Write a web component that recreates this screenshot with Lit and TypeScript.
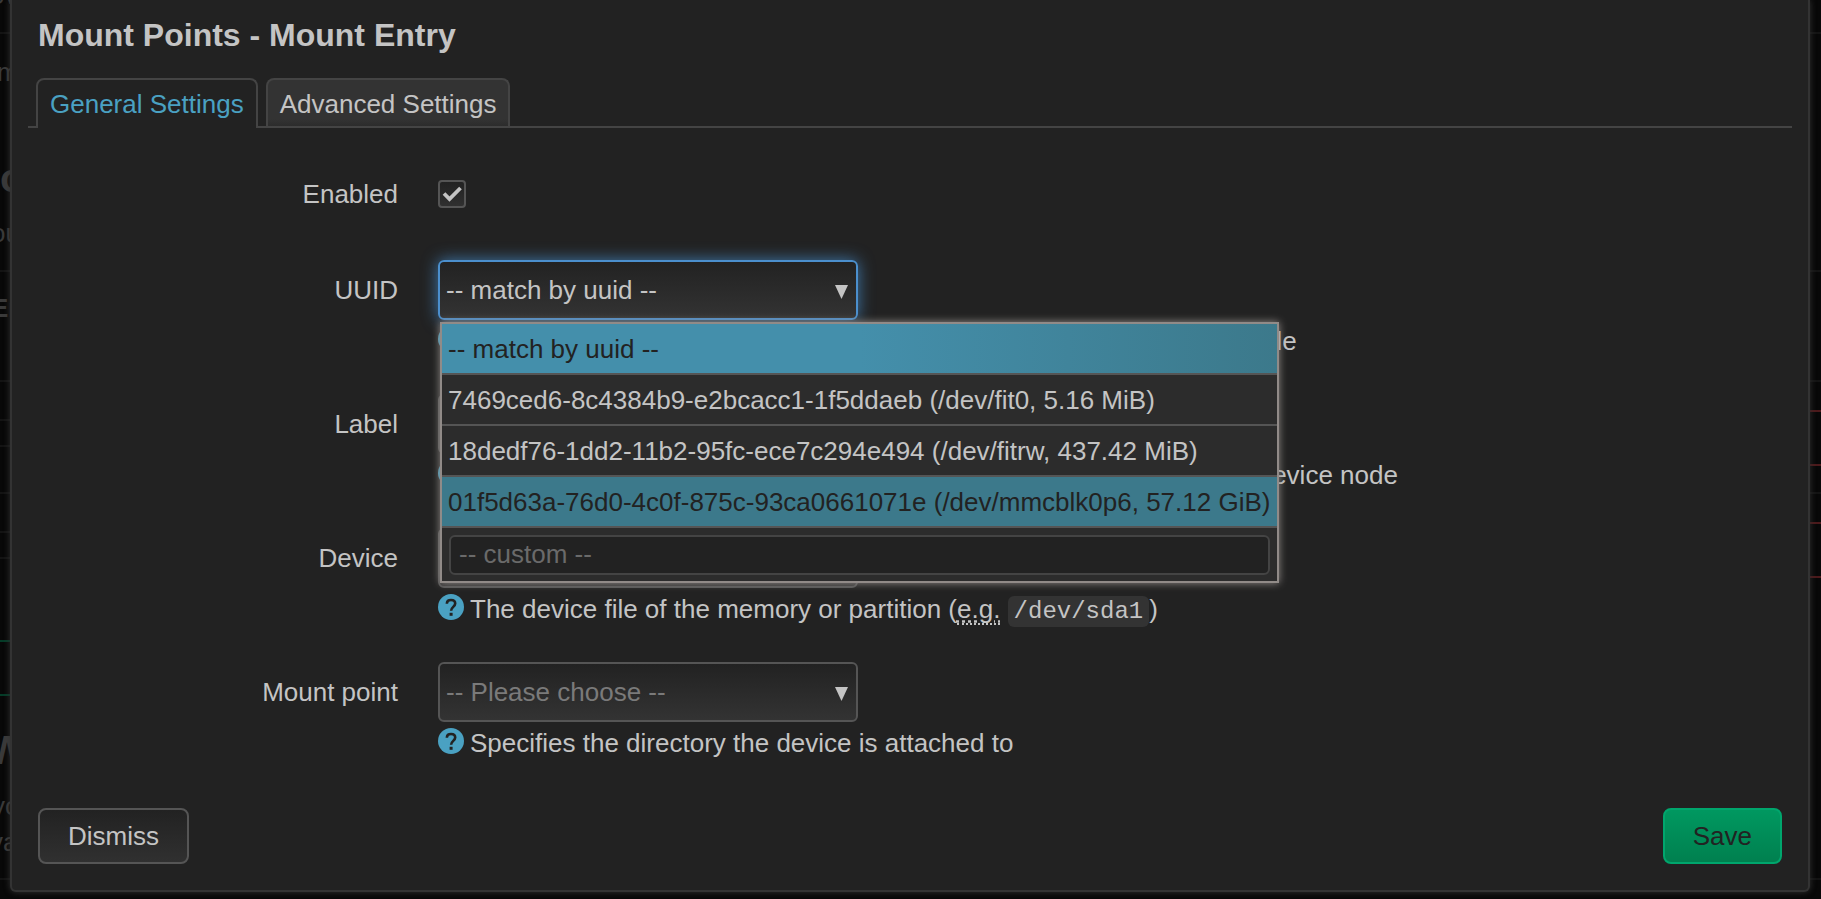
import { LitElement, html, css, svg } from "lit";
import { customElement, state } from "lit/decorators.js";

const CHOICES = [
  "-- match by uuid --",
  "7469ced6-8c4384b9-e2bcacc1-1f5ddaeb (/dev/fit0, 5.16 MiB)",
  "18dedf76-1dd2-11b2-95fc-ece7c294e494 (/dev/fitrw, 437.42 MiB)",
  "01f5d63a-76d0-4c0f-875c-93ca0661071e (/dev/mmcblk0p6, 57.12 GiB)",
];

/* Dimmed page fragments that peek out on each side of the dialog. */
const BACK_TEXT = [
  { cls: "plain", x: -10, y: -20, text: "ov" },
  { cls: "plain", x: -3, y: 57, text: "m" },
  { cls: "big", x: 0, y: 155, text: "o" },
  { cls: "plain", x: -9, y: 218, text: "ou" },
  { cls: "bold", x: -9, y: 293, text: "En" },
  { cls: "big", x: -12, y: 727, text: "W" },
  { cls: "plain", x: -8, y: 791, text: "yo" },
  { cls: "plain", x: -10, y: 827, text: "va" },
];
const BACK_RULES = [
  { y: 32, side: "both", tone: "grey" },
  { y: 270, side: "both", tone: "grey" },
  { y: 380, side: "both", tone: "grey" },
  { y: 419, side: "left", tone: "grey" },
  { y: 445, side: "left", tone: "grey" },
  { y: 492, side: "both", tone: "grey" },
  { y: 531, side: "left", tone: "grey" },
  { y: 557, side: "left", tone: "grey" },
  { y: 640, side: "left", tone: "green" },
  { y: 694, side: "left", tone: "green" },
  { y: 410, side: "right", tone: "red" },
  { y: 464, side: "right", tone: "red" },
  { y: 522, side: "right", tone: "red" },
  { y: 576, side: "right", tone: "red" },
  { y: 878, side: "both", tone: "grey" },
];

const helpIcon = svg`<svg class="help" viewBox="0 0 26 26" aria-hidden="true">
  <circle cx="13" cy="13" r="13" fill="#4aa1c2"/>
  <path d="M8.9 9.8V9.2C9 7.2 10.7 6 13 6s4.2 1.3 4.2 3.5c0 3.3-4.1 3.5-4.1 7.2" fill="none" stroke="#222" stroke-width="2.6"/>
  <rect x="11.6" y="18.8" width="3" height="3" fill="#222"/>
</svg>`;

@customElement("app-root")
export class AppRoot extends LitElement {
  @state() private enabled = true;
  @state() private selected = 0;

  static styles = css`
    :host {
      display: block;
      position: relative;
      min-height: 100vh;
      box-sizing: border-box;
      padding: 0 11px 7px 10px;
      overflow: hidden;
      background: #080808;
      color: #c4c4c4;
      font: 26px/36px "Liberation Sans", Arial, sans-serif;
    }
    * { box-sizing: border-box; }
    .backdrop { position: absolute; inset: 0; color: #3a3a3a; }
    .frag { position: absolute; white-space: nowrap; line-height: 30px; }
    .big { font-size: 40px; font-weight: bold; line-height: 46px; }
    .bold { font-weight: bold; }
    .rule { position: absolute; height: 2px; width: 12px; }
    .left { left: 0; }
    .right { right: 0; }
    .both { width: 100%; left: 0; }
    .grey { background: #141414; }
    .green { background: #053c28; }
    .red { background: #4c191b; }

    .modal {
      position: relative;
      display: flex;
      flex-direction: column;
      min-height: calc(100vh - 7px);
      padding: 0 16px 26px;
      border: 2px solid #333;
      border-top: 0;
      border-radius: 0 0 6px 6px;
      background: #222;
      box-shadow: 0 0 6px #333;
    }
    h4 { margin: 0; padding: 15px 10px 0; font-size: 32px; line-height: 40px; }
    .tabs {
      display: flex;
      gap: 8px;
      margin-top: 23px;
      padding: 0 8px;
      border-bottom: 2px solid #444;
    }
    .tab {
      padding: 6px 12px 4px;
      border: 2px solid #444;
      border-bottom: 0;
      border-radius: 8px 8px 0 0;
      background: linear-gradient(#333 85%, #2c2c2c);
      color: #c4c4c4;
      text-decoration: none;
    }
    .tab.active { margin-bottom: -2px; background: #222; color: #4aa1c2; padding-bottom: 6px; }
    form { display: flex; flex-direction: column; flex: 1; }
    .fields { display: grid; gap: 36px; padding-top: 36px; }
    .row { display: grid; grid-template-columns: 370px 1fr; column-gap: 40px; min-height: 60px; }
    .row > label { text-align: right; padding-top: 12px; }
    .check { display: flex; align-items: center; height: 60px; }
    .check input {
      appearance: none;
      width: 28px;
      height: 28px;
      margin: 0;
      border: 2px solid #555;
      border-radius: 4px;
      background: linear-gradient(#222, #303030);
    }
    .check .tick { width: 20px; height: 20px; margin-left: -24px; pointer-events: none; }
    .field { position: relative; }
    select {
      display: block;
      appearance: none;
      width: 420px;
      height: 60px;
      padding: 0 6px;
      border: 2px solid #555;
      border-radius: 6px;
      background: linear-gradient(#222, #333);
      color: #c4c4c4;
      font: inherit;
      outline: none;
    }
    select.unset { color: #7a7a7a; }
    select.open { border-color: #4b8fcd; box-shadow: 0 0 16px #3f78ab; }
    .arrow { position: absolute; left: 397px; top: 25px; width: 13px; height: 14px; fill: #c4c4c4; pointer-events: none; }
    .hint { display: flex; padding-top: 4px; line-height: 34px; }
    .help { width: 26px; height: 26px; margin: 2px 6px 0 0; flex: none; }
    abbr { text-decoration: underline dotted; border-bottom: 2px dotted #c4c4c4; line-height: 28px; display: inline-block; }
    code {
      padding: 2px 6px;
      border-radius: 6px;
      background: #333;
      font: 24px "Liberation Mono", monospace;
    }
    .menu {
      position: absolute;
      z-index: 2;
      top: 62px;
      left: 2px;
      width: max-content;
      margin: 0;
      padding: 0;
      list-style: none;
      border: 2px solid #918b88;
      background: #2c2c2c;
      box-shadow: 0 0 8px #918b88;
    }
    .menu li { border-bottom: 2px solid #555; }
    .menu li:last-child { border: 0; padding: 7px 7px 6px; }
    .opt {
      display: block;
      width: 100%;
      height: 49px;
      padding: 0 7px 0 6px;
      border: 0;
      background: none;
      color: #c4c4c4;
      font: inherit;
      text-align: left;
      white-space: nowrap;
    }
    .opt.chosen { background: linear-gradient(90deg, #448fab 50%, #3c798b); color: #222; }
    .opt.focus { background: #3c798b; color: #222; }
    .custom {
      display: block;
      width: 100%;
      height: 40px;
      padding: 0 8px 2px;
      border: 2px solid #444;
      border-radius: 6px;
      background: #222;
      color: #c4c4c4;
      font: inherit;
    }
    .custom::placeholder { color: #6a6a6a; opacity: 1; }
    .actions { display: flex; justify-content: space-between; margin-top: auto; padding: 0 10px; }
    button.act {
      height: 56px;
      padding: 0 28px;
      border: 2px solid #555;
      border-radius: 8px;
      background: linear-gradient(#222, #303030);
      color: #c4c4c4;
      font: inherit;
    }
    button.save { border-color: #00a66d; background: linear-gradient(#009860, #00804f); color: #222; }
  `;

  private hint(content: unknown) {
    return html`<div class="hint">${helpIcon}<span>${content}</span></div>`;
  }

  private dropdown(id: string, label: string, value: string, cls: string, content: unknown, menu: unknown = null) {
    return html`<div class="row">
      <label for=${id}>${label}</label>
      <div class="field">
        <select id=${id} class=${cls}><option>${value}</option></select>
        <svg class="arrow" viewBox="0 0 13 14" aria-hidden="true"><path d="M0 0h13L6.5 14z"/></svg>
        ${this.hint(content)} ${menu}
      </div>
    </div>`;
  }

  private menu() {
    return html`<ul class="menu">
      ${CHOICES.map(
        (text, i) => html`<li>
          <button
            type="button"
            class="opt ${i === this.selected ? "chosen" : i === 3 ? "focus" : ""}"
            @click=${() => (this.selected = i)}
          >${text}</button>
        </li>`,
      )}
      <li><input class="custom" type="text" placeholder="-- custom --" aria-label="Custom UUID" /></li>
    </ul>`;
  }

  render() {
    return html`
      <div class="backdrop" aria-hidden="true">
        ${BACK_RULES.map((r) => html`<div class="rule ${r.side} ${r.tone}" style="top:${r.y}px"></div>`)}
        ${BACK_TEXT.map((t) => html`<span class="frag ${t.cls}" style="left:${t.x}px;top:${t.y}px">${t.text}</span>`)}
      </div>
      <div class="modal" role="dialog" aria-labelledby="title">
        <h4 id="title">Mount Points - Mount Entry</h4>
        <nav class="tabs">
          <a class="tab active" href="#general">General Settings</a>
          <a class="tab" href="#advanced">Advanced Settings</a>
        </nav>
        <form @submit=${(e: Event) => e.preventDefault()}>
          <div class="fields">
            <div class="row">
              <label for="enabled">Enabled</label>
              <div class="check">
                <input
                  id="enabled"
                  type="checkbox"
                  .checked=${this.enabled}
                  @change=${(e: Event) => (this.enabled = (e.target as HTMLInputElement).checked)}
                />
                ${this.enabled
                  ? html`<svg class="tick" viewBox="0 0 20 20" aria-hidden="true">
                      <path d="M2 9.5l5.5 5.5L18.5 4" fill="none" stroke="#c4c4c4" stroke-width="3.8" />
                    </svg>`
                  : null}
              </div>
            </div>
            ${this.dropdown("uuid", "UUID", CHOICES[this.selected], "open",
              "If specified, mount the device by its UUID instead of a fixed device node", this.menu())}
            ${this.dropdown("label", "Label", "-- match by label --", "",
              "If specified, mount the device by the partition label instead of a fixed device node")}
            ${this.dropdown("device", "Device", "-- match by device --", "",
              html`The device file of the memory or partition (<abbr title="for example">e.g.</abbr> <code>/dev/sda1</code>)`)}
            ${this.dropdown("target", "Mount point", "-- Please choose --", "unset",
              "Specifies the directory the device is attached to")}
          </div>
          <div class="actions">
            <button type="button" class="act">Dismiss</button>
            <button type="submit" class="act save">Save</button>
          </div>
        </form>
      </div>
    `;
  }
}
